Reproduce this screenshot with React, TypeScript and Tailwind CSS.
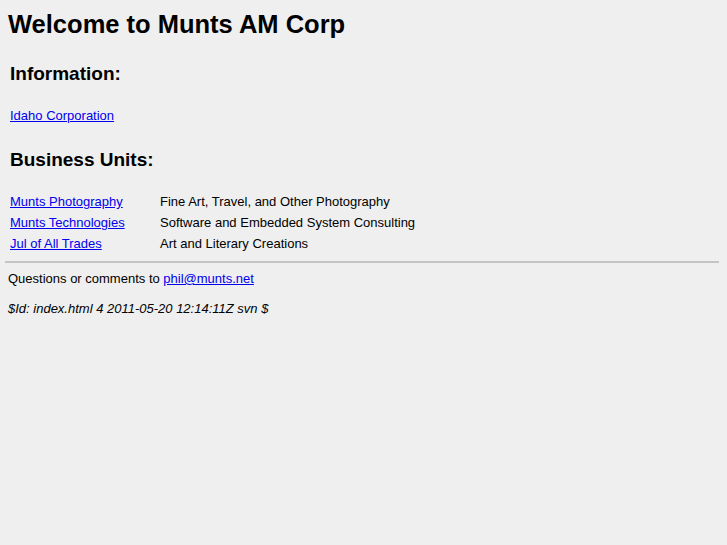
const units = [
  { name: "Munts Photography", desc: "Fine Art, Travel, and Other Photography" },
  { name: "Munts Technologies", desc: "Software and Embedded System Consulting" },
  { name: "Jul of All Trades", desc: "Art and Literary Creations" },
];

const linkCls = "text-[#0000ee] underline";

export default function App() {
  return (
    <div className="min-h-[545px] bg-[#efefef] px-2 pt-[9px] text-[13px] leading-[16px] text-black font-['Liberation_Sans',Arial,sans-serif]">
      <h1 className="text-[25.5px] font-bold leading-[30px]">Welcome to Munts AM Corp</h1>

      <div className="pl-[2px] pr-[3px]">
        <h2 className="mt-[24px] text-[19px] font-bold leading-[22px]">Information:</h2>
        <div className="mt-[23px]">
          <a href="#" className={linkCls}>Idaho Corporation</a>
        </div>

        <h2 className="mt-[25px] text-[19px] font-bold leading-[22px]">Business Units:</h2>
        <div className="mt-[23px] grid grid-cols-[150px_auto] gap-y-[5px]">
          {units.map((u) => (
            <div key={u.name} className="contents">
              <div>
                <a href="#" className={linkCls}>{u.name}</a>
              </div>
              <div>{u.desc}</div>
            </div>
          ))}
        </div>
      </div>

      <hr className="mt-[9px] -ml-[3px] border-t-2 border-[#c4c4c4]" />

      <p className="mt-[8px]">
        Questions or comments to <a href="#" className={linkCls}>phil@munts.net</a>
      </p>
      <p className="mt-[14px] italic">$Id: index.html 4 2011-05-20 12:14:11Z svn $</p>
    </div>
  );
}
